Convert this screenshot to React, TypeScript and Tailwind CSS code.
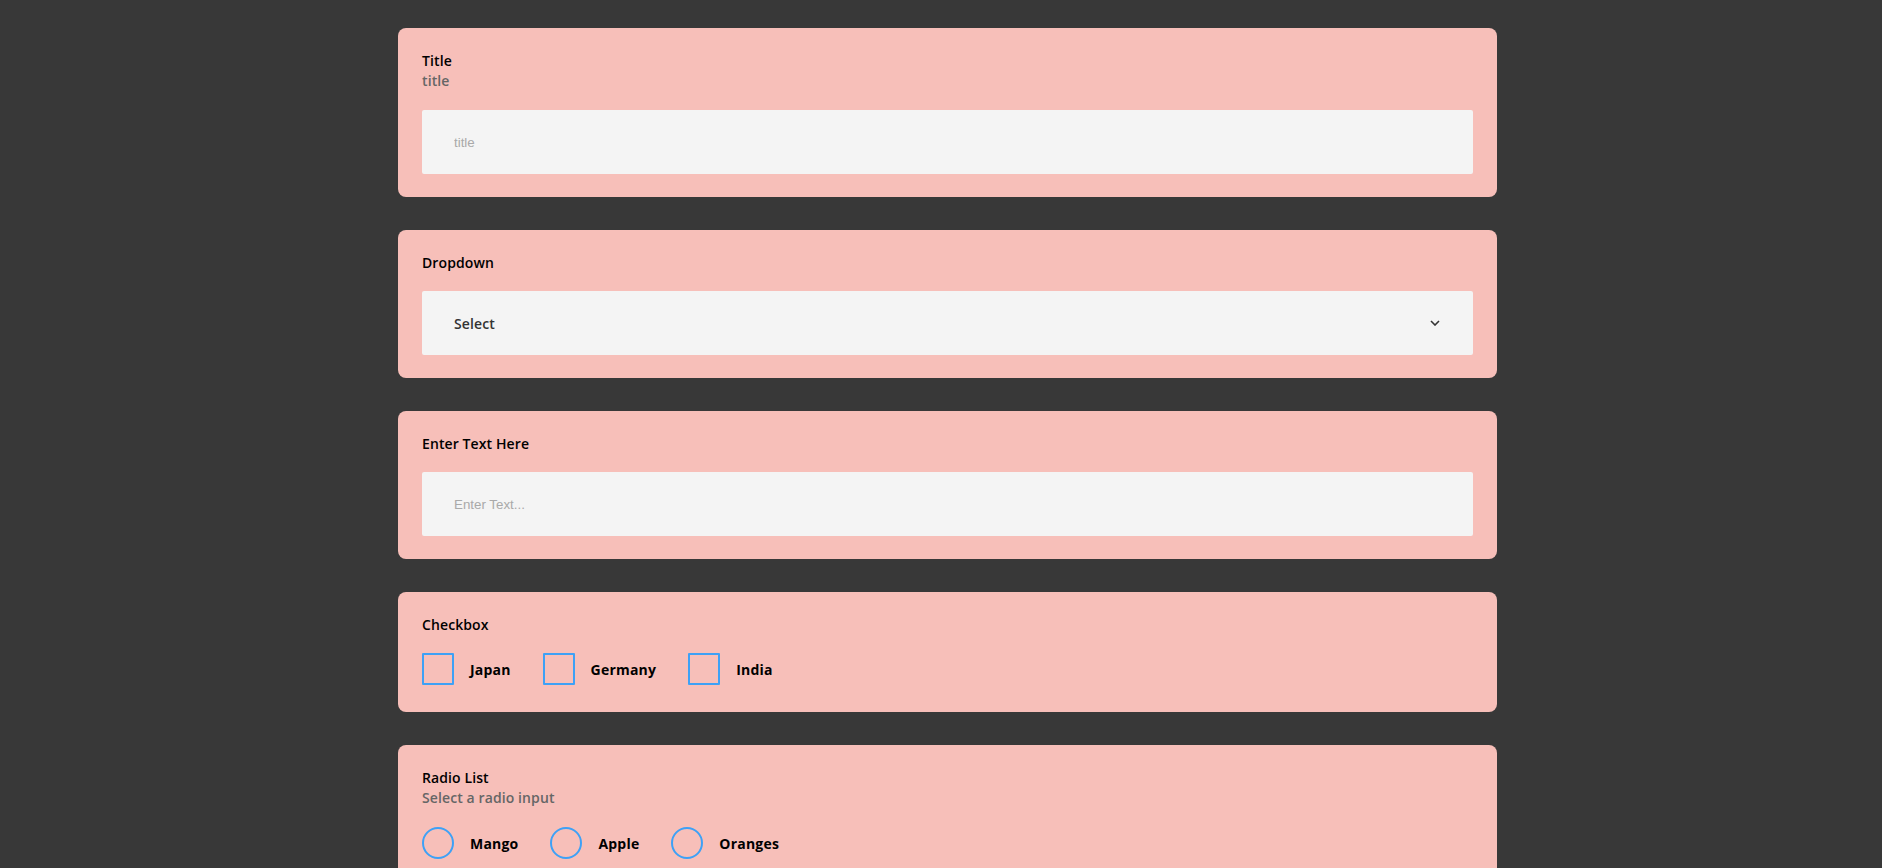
const font = { fontFamily: '"Open Sans", "Noto Sans", sans-serif' };

function Card({ children, bottom = 'pb-[23px]' }: { children: React.ReactNode; bottom?: string }) {
  return <div className={`bg-[#f7bfb9] rounded-lg px-6 pt-[23px] ${bottom}`}>{children}</div>;
}

function Label({ text, sub }: { text: string; sub?: string }) {
  return (
    <div className="text-[14px] leading-[20px] font-semibold tracking-[0.1px]">
      <div className="text-black">{text}</div>
      {sub && <div className="text-[#666]">{sub}</div>}
    </div>
  );
}

function TextInput({ placeholder, mt = 'mt-[18px]' }: { placeholder: string; mt?: string }) {
  return (
    <input
      placeholder={placeholder}
      className={`${mt} block w-full h-16 bg-[#f4f4f4] rounded-[2px] pl-8 text-[13.33px] outline-none placeholder:text-[#a9a9a9]`}
      style={{ fontFamily: '"Liberation Sans", Arial, sans-serif' }}
    />
  );
}

export default function App() {
  const countries = ['Japan', 'Germany', 'India'];
  const fruits = ['Mango', 'Apple', 'Oranges'];
  return (
    <div className="min-h-screen bg-[#383838] pt-7 pb-10" style={font}>
      <div className="ml-[398px] w-[1099px] flex flex-col gap-[33px]">
        <Card>
          <Label text="Title" sub="title" />
          <TextInput placeholder="title" mt="mt-[19px]" />
        </Card>

        <Card>
          <Label text="Dropdown" />
          <div className="mt-[18px] h-16 bg-[#f4f4f4] rounded-[2px] pl-8 pr-[33px] flex items-center justify-between">
            <span className="text-[14px] font-semibold text-[#333] tracking-[0.1px]">Select</span>
            <svg width="10" height="6" viewBox="0 0 10 6" fill="none">
              <path d="M1 1l4 4 4-4" stroke="#333" strokeWidth="1.6" />
            </svg>
          </div>
        </Card>

        <Card>
          <Label text="Enter Text Here" />
          <TextInput placeholder="Enter Text..." />
        </Card>

        <Card bottom="pb-[27px]">
          <Label text="Checkbox" />
          <div className="mt-[18px] flex items-center">
            {countries.map((c) => (
              <div key={c} className="flex items-center mr-8">
                <span className="w-8 h-8 border-2 border-[#3ea1f6] rounded-[1px]" />
                <span className="ml-4 text-[14px] font-bold text-black tracking-[0.2px]">{c}</span>
              </div>
            ))}
          </div>
        </Card>

        <Card bottom="pb-[27px]">
          <Label text="Radio List" sub="Select a radio input" />
          <div className="mt-[19px] flex items-center">
            {fruits.map((f) => (
              <div key={f} className="flex items-center mr-8">
                <span className="w-8 h-8 border-2 border-[#3ea1f6] rounded-full" />
                <span className="ml-4 text-[14px] font-bold text-black tracking-[0.2px]">{f}</span>
              </div>
            ))}
          </div>
        </Card>
      </div>
    </div>
  );
}
